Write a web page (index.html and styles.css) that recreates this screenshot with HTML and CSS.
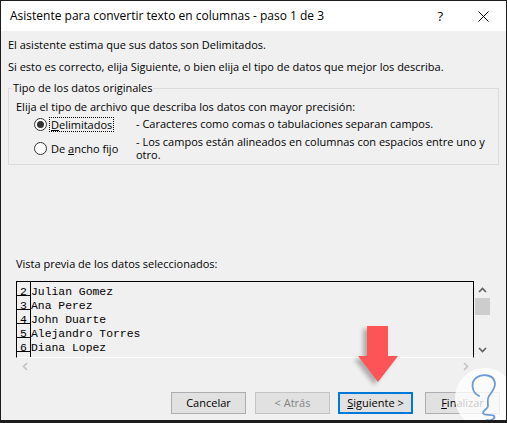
FILE: index.html
```html
<!DOCTYPE html>
<html lang="es">
<head>
<meta charset="utf-8">
<title>Asistente para convertir texto en columnas</title>
<link rel="stylesheet" href="styles.css">
</head>
<body>
<div class="window">
  <div class="titlebar">
    <span class="title">Asistente para convertir texto en columnas - paso 1 de 3</span>
    <span class="help">?</span>
    <svg class="close" width="11" height="11" viewBox="0 0 11 11"><path d="M0.5 0.5L10.5 10.5M10.5 0.5L0.5 10.5" stroke="#000" stroke-width="1" fill="none"/></svg>
  </div>
  <div class="content">
    <p class="line gap6">El asistente estima que sus datos son Delimitados.</p>
    <p class="line gap6">Si esto es correcto, elija Siguiente, o bien elija el tipo de datos que mejor los describa.</p>
    <fieldset class="group">
      <legend>Tipo de los datos originales</legend>
      <p class="line">Elija el tipo de archivo que describa los datos con mayor precisión:</p>
      <div class="opts">
        <span class="radio checked"></span>
        <span class="label focus"><u>D</u>elimitados</span>
        <span class="desc">- Caracteres como comas o tabulaciones separan campos.</span>
        <span class="radio"></span>
        <span class="label">De <u>a</u>ncho fijo</span>
        <span class="desc two">- Los campos están alineados en columnas con espacios entre uno y<br>otro.</span>
      </div>
    </fieldset>
    <p class="line preview-label">Vista previa de los datos seleccionados:</p>
    <div class="preview">
      <div class="data">
        <div class="row"><span class="num">2</span><span class="txt">Julian Gomez</span></div>
        <div class="row"><span class="num">3</span><span class="txt">Ana Perez</span></div>
        <div class="row"><span class="num">4</span><span class="txt">John Duarte</span></div>
        <div class="row"><span class="num">5</span><span class="txt">Alejandro Torres</span></div>
        <div class="row"><span class="num">6</span><span class="txt">Diana Lopez</span></div>
        <div class="row"><span class="num"></span><span class="txt"></span></div>
      </div>
      <div class="vscroll">
        <div class="sbtn"><svg width="9" height="6" viewBox="0 0 9 6"><path d="M1 5L4.5 1.5L8 5" stroke="#606060" stroke-width="1.6" fill="none"/></svg></div>
        <div class="thumb"></div>
        <div class="track"></div>
        <div class="sbtn"><svg width="9" height="6" viewBox="0 0 9 6"><path d="M1 1L4.5 4.5L8 1" stroke="#606060" stroke-width="1.6" fill="none"/></svg></div>
      </div>
      <div class="hscroll">
        <div class="sbtn"><svg width="6" height="9" viewBox="0 0 6 9"><path d="M5 1L1.5 4.5L5 8" stroke="#c2c2c2" stroke-width="1.6" fill="none"/></svg></div>
        <div class="sbtn"><svg width="6" height="9" viewBox="0 0 6 9"><path d="M1 1L4.5 4.5L1 8" stroke="#c2c2c2" stroke-width="1.6" fill="none"/></svg></div>
      </div>
    </div>
    <div class="buttons">
      <button class="btn">Cancelar</button>
      <button class="btn disabled b-back">&lt; Atrás</button>
      <button class="btn primary b-next"><u>S</u>iguiente &gt;</button>
      <button class="btn b-finish"><u>F</u>inalizar</button>
    </div>
  </div>
  <svg class="arrow" width="50" height="66" viewBox="0 0 50 66"><path d="M12 3H33V33H43L23 59L3 33H12Z" fill="#fd5457"/></svg>
  <svg class="logo" width="56" height="57" viewBox="0 0 56 57">
    <circle cx="35" cy="33" r="30" fill="rgba(255,255,255,0.78)"/>
    <path d="M29 31C21 27 21 17 26 13C31 9 41 9 44 15C47 21 42 27 39 31C37 34 38 38 38 41C38 44 33 45 33 48C33 51 42 49 44 51C46 54 40 56 37 55" stroke="#6a9bd8" stroke-width="1.8" fill="none" stroke-linecap="round"/>
  </svg>
</div>
</body>
</html>
```

FILE: styles.css
```css
body {
  margin: 0;
}

.window {
  position: relative;
  width: 507px;
  height: 423px;
  box-sizing: border-box;
  border: 1px solid #1c1c1c;
  border-bottom-width: 3px;
  background: #f0f0f0;
  overflow: hidden;
  font-family: "Open Sans", "Noto Sans", sans-serif;
  font-size: 11px;
  color: #000;
}

.titlebar {
  height: 30px;
  background: #fff;
  display: flex;
  align-items: center;
  padding-left: 9px;
}

.title {
  flex: 1;
  font-size: 12px;
  line-height: 16px;
}

.help {
  font-size: 13px;
  margin-right: 35px;
}

.close {
  margin-right: 17px;
}

.content {
  padding: 0 7px;
}

.line {
  margin: 0;
  line-height: 16px;
  white-space: nowrap;
}

.gap6 {
  margin-top: 6px;
}

.group {
  margin: 5px 0 0;
  padding: 3px 7px 3px;
  border: 1px solid #dcdcdc;
  min-width: 0;
}

.group legend {
  padding: 0 1px;
  margin-left: -4px;
  line-height: 16px;
}

.opts {
  display: grid;
  grid-template-columns: 13px 85px 1fr;
  row-gap: 3px;
  align-items: center;
  padding-left: 18px;
  margin-top: 1px;
}

.radio {
  width: 13px;
  height: 13px;
  box-sizing: border-box;
  border: 1px solid #333;
  border-radius: 50%;
  background: #fff;
  display: flex;
  align-items: center;
  justify-content: center;
}

.radio.checked::after {
  content: "";
  width: 7px;
  height: 7px;
  border-radius: 50%;
  background: #333;
}

.label {
  margin-left: 2px;
  padding: 0 1px;
  border: 1px dotted transparent;
  line-height: 13px;
  justify-self: start;
  white-space: nowrap;
}

.label.focus {
  border-color: #000;
}

.desc {
  padding-left: 4px;
  line-height: 16px;
  white-space: nowrap;
}

.desc.two {
  line-height: 13px;
}

.preview-label {
  margin: 91px 0 0 8px;
}

.preview {
  margin: 9px 0 0 8px;
  width: 475px;
  display: grid;
  grid-template-columns: 458px 17px;
  grid-template-rows: 77px 17px;
}

.data {
  box-sizing: border-box;
  border: 1px solid #000;
  border-bottom-color: #fff;
  overflow: hidden;
  font-family: "Liberation Mono", "Courier New", monospace;
  font-size: 11.4px;
}

.row {
  display: flex;
  height: 14px;
  line-height: 20px;
}

.num {
  flex: none;
  width: 14px;
  height: 14px;
  box-sizing: border-box;
  border-right: 1px solid #000;
  border-bottom: 1px solid #000;
  text-align: center;
}

.txt {
  white-space: pre;
}

.vscroll {
  display: flex;
  flex-direction: column;
}

.sbtn {
  flex: none;
  width: 17px;
  height: 17px;
  display: flex;
  align-items: center;
  justify-content: center;
}

.thumb {
  flex: none;
  height: 17px;
  margin-left: 1px;
  width: 15px;
  background: #cdcdcd;
}

.track {
  flex: 1;
}

.hscroll {
  display: flex;
  justify-content: space-between;
}

.buttons {
  display: flex;
  justify-content: flex-end;
  margin: 17px -1px 0 0;
}

.btn {
  width: 75px;
  height: 22px;
  box-sizing: border-box;
  border: 1px solid #adadad;
  background: #e1e1e1;
  font-family: inherit;
  font-size: 11px;
  color: #000;
  padding: 0;
  line-height: 16px;
}

.btn.disabled {
  color: #838383;
  border-color: #c4c4c4;
}

.btn.primary {
  border: 2px solid #0078d7;
}

.b-back {
  margin-left: 9px;
}

.b-next {
  margin-left: 8px;
}

.b-finish {
  margin-left: 12px;
}

.arrow {
  position: absolute;
  left: 354px;
  top: 322px;
  filter: drop-shadow(-4px 3px 2px rgba(0, 0, 0, 0.28));
}

.logo {
  position: absolute;
  left: 449px;
  top: 364px;
}
```
